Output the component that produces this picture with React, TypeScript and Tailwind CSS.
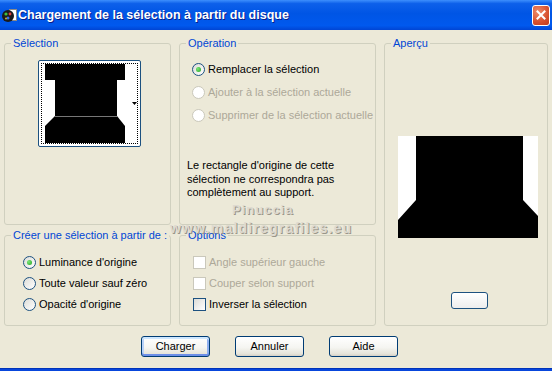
import React from "react";

const ui = "font-['Liberation_Sans',Arial,sans-serif] text-[11px] leading-[13px]";

function Radio({ checked = false, disabled = false }: { checked?: boolean; disabled?: boolean }) {
  return (
    <span
      className={
        "flex h-[13px] w-[13px] shrink-0 items-center justify-center rounded-full border " +
        (disabled
          ? "border-[#cac8bb] bg-white"
          : "border-[#1c5180] bg-[linear-gradient(135deg,#dcdcd7,#ffffff)]")
      }
    >
      {checked && (
        <span className="h-[5px] w-[5px] rounded-full bg-[radial-gradient(circle_at_35%_35%,#7be877,#21a121)]" />
      )}
    </span>
  );
}

function Check({ disabled = false }: { disabled?: boolean }) {
  return (
    <span
      className={
        "block h-[13px] w-[13px] shrink-0 border " +
        (disabled
          ? "border-[#cac8bb] bg-white"
          : "border-[#1c5180] bg-[linear-gradient(135deg,#dcdcd7,#ffffff)]")
      }
    />
  );
}

function Group({
  title,
  className = "",
  children,
}: {
  title: string;
  className?: string;
  children?: React.ReactNode;
}) {
  return (
    <fieldset className={"min-w-0 rounded-[3px] border border-[#d0d0bf] " + className}>
      <legend className="ml-[6px] px-[2px] text-[#0046d5]">{title}</legend>
      {children}
    </fieldset>
  );
}

function XpButton({ label, isDefault = false }: { label: string; isDefault?: boolean }) {
  return (
    <button
      className={
        "h-[21px] w-[69px] rounded-[3px] border border-[#003c74] bg-[linear-gradient(to_bottom,#ffffff,#f5f5f1_55%,#e6e4da_88%,#d6d0c5)] text-black " +
        (isDefault
          ? "shadow-[inset_0_2px_0_#cee7ff,inset_0_-2px_0_#6d8fe8,inset_2px_0_0_#b9d2f8,inset_-2px_0_0_#8fb0f0]"
          : "")
      }
    >
      {label}
    </button>
  );
}

function AppIcon() {
  return (
    <svg width="16" height="16" viewBox="0 0 16 16">
      <rect x="8.5" y="2.5" width="7" height="11" fill="#ffffff" stroke="#8a8a8a" />
      <circle cx="7" cy="9" r="6" fill="#1a1a1a" />
      <circle cx="5" cy="7" r="1.6" fill="#3fbf3f" />
      <circle cx="9" cy="7" r="1.4" fill="#e04040" />
      <circle cx="7" cy="11" r="1.5" fill="#3b6fe0" />
      <circle cx="5" cy="11.5" r="0.9" fill="#e0c030" />
    </svg>
  );
}

function SelectionThumb() {
  return (
    <div className="ml-[33px] mt-[10px] h-[87px] w-[103px] rounded-[2px] border border-[#1c5180] bg-white p-[2px]">
      <div className="h-full w-full border border-dotted border-black">
        <svg width="95" height="79" viewBox="0 0 95 79" className="block">
          <rect x="3" y="0" width="80" height="16" fill="#000" />
          <rect x="13" y="16" width="62" height="36" fill="#000" />
          <polygon points="13,52 75,52 83,62 83,79 3,79 3,62" fill="#000" />
          <line x1="13" y1="52.5" x2="75" y2="52.5" stroke="#777" strokeWidth="1" />
          <polygon points="90,38 95,38 92.5,41" fill="#000" />
        </svg>
      </div>
    </div>
  );
}

function PreviewImage() {
  return (
    <svg width="140" height="102" viewBox="0 0 140 102" className="ml-[13px] mt-[86px] block">
      <rect x="0" y="0" width="140" height="102" fill="#fff" />
      <polygon points="18,0 125,0 125,64 140,80 140,102 0,102 0,84 18,64" fill="#000" />
    </svg>
  );
}

export default function App() {
  return (
    <div className={"relative flex h-[371px] w-[552px] flex-col overflow-hidden bg-[#ece9d8] " + ui}>
      {/* caption bar */}
      <div className="flex h-[30px] shrink-0 items-center bg-[linear-gradient(to_bottom,#3d8ffd_0%,#0d60ea_12%,#0055e5_45%,#0059ee_85%,#0045d4_100%)] pl-[1px] pr-[2px]">
        <AppIcon />
        <span className="ml-[1px] font-['Liberation_Sans',Arial,sans-serif] text-[12.5px] font-bold text-white [text-shadow:1px_1px_0_#0a1e8a]">
          Chargement de la sélection à partir du disque
        </span>
        <div className="ml-auto flex h-[21px] w-[18px] items-center justify-center rounded-[3px] border border-white bg-[radial-gradient(circle_at_30%_30%,#ee8c6c,#d7502e_60%,#c03a1c)]">
          <svg width="10" height="10" viewBox="0 0 10 10">
            <path d="M1.5 1.5 L8.5 8.5 M8.5 1.5 L1.5 8.5" stroke="#fff" strokeWidth="2" strokeLinecap="square" />
          </svg>
        </div>
      </div>

      {/* dialog body */}
      <div className="flex flex-1 flex-col pl-[4px] pt-[7px]">
        <div className="grid grid-cols-[167px_197px_164px] grid-rows-[188px_97px] gap-x-[8px] gap-y-[4px]">
          <Group title="Sélection">
            <SelectionThumb />
          </Group>

          <Group title="Opération">
            <div className="flex flex-col pl-[12px] pt-[8px]">
              <label className="flex h-[23px] items-center gap-[3px] text-black">
                <Radio checked />
                <span>Remplacer la sélection</span>
              </label>
              <label className="flex h-[23px] items-center gap-[3px] text-[#aca899]">
                <Radio disabled />
                <span>Ajouter à la sélection actuelle</span>
              </label>
              <label className="flex h-[23px] items-center gap-[3px] text-[#aca899]">
                <Radio disabled />
                <span>Supprimer de la sélection actuelle</span>
              </label>
            </div>
            <p className="ml-[7px] mt-[32px] leading-[13.5px] text-black">
              Le rectangle d'origine de cette
              <br />
              sélection ne correspondra pas
              <br />
              complètement au support.
            </p>
          </Group>

          <Group title="Aperçu" className="row-span-2">
            <PreviewImage />
            <div className="ml-[66px] mt-[54px] h-[17px] w-[37px] rounded-[3px] border border-[#1c5180] bg-[linear-gradient(to_bottom,#ffffff,#ededed)]" />
          </Group>

          <Group title="Créer une sélection à partir de :">
            <div className="flex flex-col pl-[18px] pt-[10px]">
              <label className="flex h-[21px] items-center gap-[3px]">
                <Radio checked />
                <span>Luminance d'origine</span>
              </label>
              <label className="flex h-[21px] items-center gap-[3px]">
                <Radio />
                <span>Toute valeur sauf zéro</span>
              </label>
              <label className="flex h-[21px] items-center gap-[3px]">
                <Radio />
                <span>Opacité d'origine</span>
              </label>
            </div>
          </Group>

          <Group title="Options">
            <div className="flex flex-col pl-[13px] pt-[10px]">
              <label className="flex h-[21px] items-center gap-[3px] text-[#aca899]">
                <Check disabled />
                <span>Angle supérieur gauche</span>
              </label>
              <label className="flex h-[21px] items-center gap-[3px] text-[#aca899]">
                <Check disabled />
                <span>Couper selon support</span>
              </label>
              <label className="flex h-[21px] items-center gap-[3px]">
                <Check />
                <span>Inverser la sélection</span>
              </label>
            </div>
          </Group>
        </div>

        <div className="mt-[10px] flex gap-[25px] pl-[137px]">
          <XpButton label="Charger" isDefault />
          <XpButton label="Annuler" />
          <XpButton label="Aide" />
        </div>
      </div>

      {/* window frame bottom edge */}
      <div className="h-[3px] shrink-0 border-t border-[#0033b8] bg-[#0846dc]" />

      {/* author watermark */}
      <div className="pointer-events-none absolute left-[232px] top-[203px] font-['Liberation_Sans',Arial,sans-serif] text-[13px] font-bold leading-[14px] tracking-[1px] text-[#dedad0] [text-shadow:1px_1px_0_#9a968a]">
        Pinuccia
      </div>
      <div className="pointer-events-none absolute left-[170px] top-[221px] font-['Liberation_Sans',Arial,sans-serif] text-[14px] font-bold leading-[15px] tracking-[1.2px] text-[#dedad0] [text-shadow:1px_1px_0_#9a968a]">
        www.maldiregrafiles.eu
      </div>
    </div>
  );
}
